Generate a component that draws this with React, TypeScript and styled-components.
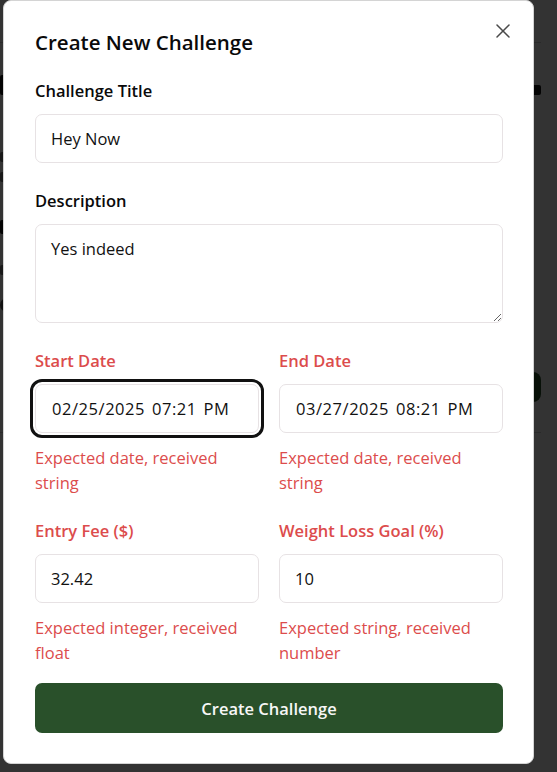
import React from 'react';
import styled, { createGlobalStyle } from 'styled-components';
import { X } from 'lucide-react';

const GlobalStyle = createGlobalStyle`
  html, body {
    margin: 0;
    padding: 0;
  }
  body {
    background: #fff;
    font-family: "Open Sans", "Noto Sans", sans-serif;
    overflow: hidden;
  }
  * {
    box-sizing: border-box;
  }
`;

/* page behind the dialog, only slivers of it show at the edges */
const Page = styled.div`
  width: 541px;
  height: 772px;
`;

const TopBar = styled.header`
  height: 43px;
  border-bottom: 1px solid #cfcfcf;
`;

const PageBody = styled.main`
  display: flex;
  flex-direction: column;
`;

const PageRow = styled.div<{ $top: number }>`
  display: flex;
  justify-content: space-between;
  align-items: flex-end;
  margin-top: ${(p) => p.$top}px;
`;

const Blot = styled.div<{ $w: number; $h: number; $c?: string; $r?: number }>`
  width: ${(p) => p.$w}px;
  height: ${(p) => p.$h}px;
  background: ${(p) => p.$c ?? '#111'};
  border-radius: ${(p) => p.$r ?? 2}px;
`;

const Divider = styled.hr`
  margin: 30px 0 0;
  border: none;
  border-top: 1px solid #cfcfcf;
`;

/* dialog */
const Overlay = styled.div`
  position: fixed;
  inset: 0;
  background: rgba(0, 0, 0, 0.8);
`;

const Dialog = styled.div`
  position: fixed;
  left: 3px;
  top: 0;
  width: 531px;
  height: 764px;
  background: #fff;
  border: 1px solid #d4d4d4;
  border-radius: 8px;
  padding: 27px 30px 30px 31px;
  display: flex;
  flex-direction: column;
`;

const Close = styled.button`
  position: absolute;
  top: 18px;
  right: 18px;
  width: 24px;
  height: 24px;
  padding: 0;
  border: none;
  background: none;
  color: #4a4a4a;
  display: flex;
  cursor: pointer;
`;

const Title = styled.h2`
  margin: 0 0 23px;
  font-size: 20.5px;
  line-height: 28px;
  font-weight: 600;
  color: #0a0a0a;
`;

const Field = styled.div<{ $space?: number }>`
  display: flex;
  flex-direction: column;
  margin-top: ${(p) => p.$space ?? 0}px;
  min-width: 0;
`;

const Row = styled.div<{ $space: number }>`
  display: grid;
  grid-template-columns: 1fr 1fr;
  column-gap: 20px;
  margin-top: ${(p) => p.$space}px;
`;

const Label = styled.label<{ $error?: boolean }>`
  font-size: 16.5px;
  line-height: 24px;
  font-weight: 600;
  color: ${(p) => (p.$error ? '#dc4c4c' : '#0a0a0a')};
  margin-bottom: 11px;
`;

const Input = styled.input<{ $focus?: boolean; $date?: boolean }>`
  width: 100%;
  height: 49px;
  border: 1px solid #e7e2e4;
  border-radius: 7px;
  padding: 0 15px 0 ${(p) => (p.$date ? 16 : 15)}px;
  font-family: "Open Sans", "Noto Sans", sans-serif;
  font-size: 16.5px;
  color: #111;
  background: #fff;
  letter-spacing: ${(p) => (p.$date ? '0.55px' : 'normal')};
  word-spacing: ${(p) => (p.$date ? '2px' : 'normal')};
  outline: ${(p) => (p.$focus ? '3px solid #111' : 'none')};
  outline-offset: 2px;
`;

const TextArea = styled.textarea`
  width: 100%;
  height: 99px;
  border: 1px solid #e7e2e4;
  border-radius: 7px;
  padding: 12px 15px;
  font-family: "Open Sans", "Noto Sans", sans-serif;
  font-size: 16.5px;
  line-height: 24px;
  color: #111;
  resize: vertical;
  outline: none;
`;

const ErrorText = styled.p`
  margin: 12px 0 0;
  font-size: 16.5px;
  line-height: 25px;
  color: #dc4c4c;
`;

const Submit = styled.button`
  margin-top: 18px;
  height: 50px;
  width: 100%;
  border: none;
  border-radius: 7px;
  background: #29502a;
  color: #f7f7f7;
  font-family: "Open Sans", "Noto Sans", sans-serif;
  font-size: 16.5px;
  font-weight: 600;
  cursor: pointer;
`;

export default function App() {
  return (
    <>
      <GlobalStyle />
      <Page aria-hidden="true">
        <TopBar />
        <PageBody>
          <PageRow $top={32}>
            <Blot $w={60} $h={20} />
            <Blot $w={30} $h={10} />
          </PageRow>
          <Blot $w={40} $h={10} $c="#777" style={{ marginTop: 57 }} />
          <Blot $w={40} $h={10} $c="#777" style={{ marginTop: 10 }} />
          <Blot $w={40} $h={14} style={{ marginTop: 38 }} />
          <Blot $w={40} $h={10} $c="#777" style={{ marginTop: 31 }} />
          <Blot $w={14} $h={14} $c="#555" $r={7} style={{ marginTop: 23 }} />
          <PageRow $top={60}>
            <span />
            <Blot $w={120} $h={30} $c="#29502a" $r={8} />
          </PageRow>
          <Divider />
        </PageBody>
      </Page>

      <Overlay>
        <Dialog role="dialog" aria-labelledby="dlg-title">
          <Close aria-label="Close">
            <X size={24} strokeWidth={1.5} />
          </Close>
          <Title id="dlg-title">Create New Challenge</Title>

          <Field>
            <Label htmlFor="title">Challenge Title</Label>
            <Input id="title" defaultValue="Hey Now" />
          </Field>

          <Field $space={26}>
            <Label htmlFor="desc">Description</Label>
            <TextArea id="desc" defaultValue="Yes indeed" />
          </Field>

          <Row $space={26}>
            <Field>
              <Label $error htmlFor="start">Start Date</Label>
              <Input id="start" $date $focus defaultValue="02/25/2025 07:21 PM" />
              <ErrorText>Expected date, received string</ErrorText>
            </Field>
            <Field>
              <Label $error htmlFor="end">End Date</Label>
              <Input id="end" $date defaultValue="03/27/2025 08:21 PM" />
              <ErrorText>Expected date, received string</ErrorText>
            </Field>
          </Row>

          <Row $space={24}>
            <Field>
              <Label $error htmlFor="fee">Entry Fee ($)</Label>
              <Input id="fee" defaultValue="32.42" />
              <ErrorText>Expected integer, received float</ErrorText>
            </Field>
            <Field>
              <Label $error htmlFor="goal">Weight Loss Goal (%)</Label>
              <Input id="goal" defaultValue="10" />
              <ErrorText>Expected string, received number</ErrorText>
            </Field>
          </Row>

          <Submit type="button">Create Challenge</Submit>
        </Dialog>
      </Overlay>
    </>
  );
}
